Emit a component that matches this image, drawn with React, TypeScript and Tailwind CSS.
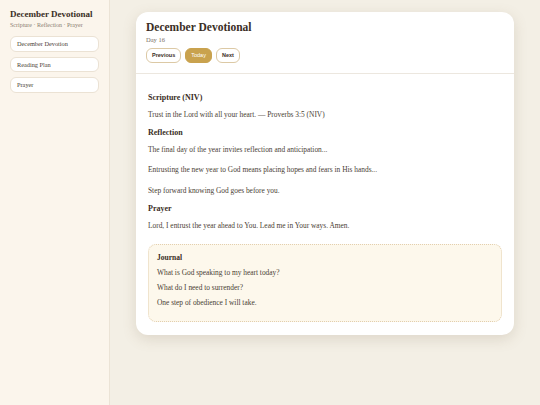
import React from "react";

const navItems = ["December Devotion", "Reading Plan", "Prayer"];

const reflection = [
  "The final day of the year invites reflection and anticipation...",
  "Entrusting the new year to God means placing hopes and fears in His hands...",
  "Step forward knowing God goes before you.",
];

const journal = [
  "What is God speaking to my heart today?",
  "What do I need to surrender?",
  "One step of obedience I will take.",
];

export default function App() {
  return (
    <div className="flex h-[405px] w-[540px] bg-[#f3efe5] font-['Georgia','Liberation_Serif',serif] text-[#3b2f26]">
      <aside className="flex w-[110px] shrink-0 flex-col border-r border-[#ebe3d6] bg-[#fbf5ec] px-[10px] pt-[8px]">
        <h1 className="text-[9px] font-bold leading-[12px] text-[#3a2e25]">December Devotional</h1>
        <p className="mt-[1px] text-[6px] leading-[8px] text-[#8a7d70]">Scripture · Reflection · Prayer</p>
        <nav className="mt-[7px] flex flex-col gap-[5px]">
          {navItems.map((item) => (
            <div
              key={item}
              className="flex h-[15.5px] items-center rounded-[6px] border border-[#ebe2d4] bg-white px-[6px] text-[6.3px] text-[#4a3e34]"
            >
              {item}
            </div>
          ))}
        </nav>
      </aside>

      <main className="flex-1 px-[26px] pt-[12px]">
        <div className="rounded-[12px] bg-white shadow-[0_4px_14px_rgba(120,100,70,0.18)]">
          <div className="border-b border-[#ece7df] px-[10px] pb-[10px] pt-[8px]">
            <h2 className="text-[11.5px] font-bold leading-[14px] text-[#3a2e25]">December Devotional</h2>
            <p className="mt-[2px] text-[6.5px] leading-[8px] text-[#7a6e63]">Day 16</p>
            <div className="mt-[4px] flex gap-[4px] font-['Liberation_Sans',Arial,sans-serif] text-[5.5px]">
              <button className="h-[15px] rounded-[6px] border border-[#dcc9a5] bg-white px-[5px] font-bold text-[#3a2e25]">
                Previous
              </button>
              <button className="h-[15px] rounded-[6px] border border-[#c9a24e] bg-[#c9a24e] px-[5px] text-white">
                Today
              </button>
              <button className="h-[15px] rounded-[6px] border border-[#dcc9a5] bg-white px-[5px] font-bold text-[#3a2e25]">
                Next
              </button>
            </div>
          </div>

          <div className="px-[12px] pb-[13px] pt-[19px] text-[7.4px] leading-[9px] text-[#4a3e34]">
            <h3 className="text-[8px] font-bold leading-[10px] text-[#3a2e25]">Scripture (NIV)</h3>
            <p className="mt-[7px]">Trust in the Lord with all your heart. — Proverbs 3:5 (NIV)</p>
            <h3 className="mt-[9px] text-[8px] font-bold leading-[10px] text-[#3a2e25]">Reflection</h3>
            {reflection.map((line, i) => (
              <p key={line} className={i === 0 ? "mt-[6.5px]" : "mt-[11.5px]"}>
                {line}
              </p>
            ))}
            <h3 className="mt-[9px] text-[8px] font-bold leading-[10px] text-[#3a2e25]">Prayer</h3>
            <p className="mt-[7px]">Lord, I entrust the year ahead to You. Lead me in Your ways. Amen.</p>

            <div className="mt-[14px] h-[78px] rounded-[8px] border border-dotted border-[#e3cfae] bg-[#fdf8ec] px-[8px] pt-[8px]">
              <h4 className="text-[7.5px] font-bold leading-[9px] text-[#3a2e25]">Journal</h4>
              {journal.map((line) => (
                <p key={line} className="mt-[6px]">
                  {line}
                </p>
              ))}
            </div>
          </div>
        </div>
      </main>
    </div>
  );
}
